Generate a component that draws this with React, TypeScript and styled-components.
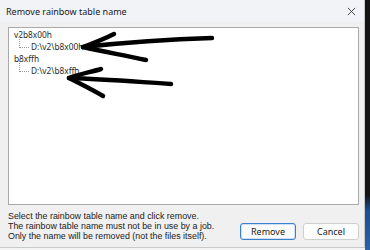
import React from "react";
import styled, { createGlobalStyle } from "styled-components";

const GlobalStyle = createGlobalStyle`
  html, body {
    margin: 0;
    padding: 0;
    background: #f4f4f4;
  }
  body {
    font-family: "Noto Sans", "Open Sans", sans-serif;
    font-size: 9px;
    color: #1e1e1e;
  }
`;

type Node = { name: string; path: string };

const nodes: Node[] = [
  { name: "v2b8x00h", path: "D:\\v2\\b8x00h" },
  { name: "b8xffh", path: "D:\\v2\\b8xffh" },
];

const App = () => {
  return (
    <>
      <GlobalStyle />
      <Screen>
        <Window>
          <TitleBar>
            <span>Remove rainbow table name</span>
            <CloseIcon viewBox="0 0 10 10" aria-hidden="true">
              <path d="M1 1 L9 9 M9 1 L1 9" />
            </CloseIcon>
          </TitleBar>
          <Body>
            <ListBox>
              {nodes.map((n) => (
                <TreeGroup key={n.name}>
                  <TreeRoot>{n.name}</TreeRoot>
                  <TreeChild>{n.path}</TreeChild>
                </TreeGroup>
              ))}
              <Scribble viewBox="0 0 350 176" aria-hidden="true">
                <path d="M203 10 C170 11 120 14 74 19" />
                <path d="M105 6 C95 11 85 15 74 19 C95 24 115 27 137 32" />
                <path d="M162 56 C130 54 95 51 60 50" />
                <path d="M92 41 C82 44 71 46 60 50 C72 56 84 62 94 68" />
              </Scribble>
            </ListBox>
            <Footer>
              <Hint>
                <p>Select the rainbow table name and click remove.</p>
                <p>The rainbow table name must not be in use by a job.</p>
                <p>Only the name will be removed (not the files itself).</p>
              </Hint>
              <Buttons>
                <Button $primary>Remove</Button>
                <Button>Cancel</Button>
              </Buttons>
            </Footer>
          </Body>
        </Window>
        <Edge />
      </Screen>
    </>
  );
};

export default App;

const Screen = styled.div`
  display: flex;
  width: 370px;
  height: 250px;
  overflow: hidden;
`;

const Window = styled.div`
  width: 364px;
  height: 247px;
  display: flex;
  flex-direction: column;
  background: #f0f0f0;
  border-right: 1px solid #c9c9c9;
  border-bottom: 1px solid #c9c9c9;
`;

const Edge = styled.div`
  flex: 1;
  height: 250px;
  background: linear-gradient(#141414 0%, #141414 78%, #1d4d8c 84%, #2a63a8 100%);
`;

const TitleBar = styled.div`
  height: 22px;
  display: flex;
  align-items: center;
  justify-content: space-between;
  padding: 0 8px 0 6px;
  background: #f1f3f7;
  font-size: 9px;
  color: #1a1a1a;
`;

const CloseIcon = styled.svg`
  width: 9px;
  height: 9px;
  stroke: #333;
  stroke-width: 1;
  fill: none;
`;

const Body = styled.div`
  flex: 1;
  display: flex;
  flex-direction: column;
  padding: 5px 5px 0 8px;
`;

const ListBox = styled.div`
  position: relative;
  height: 174px;
  background: #fff;
  border: 1px solid #a9a9a9;
  padding: 1px 4px;
`;

const TreeGroup = styled.div`
  display: flex;
  flex-direction: column;
`;

const TreeRoot = styled.div`
  height: 12px;
  line-height: 12px;
  font-size: 8.3px;
  padding-left: 1px;
  color: #2a2a2a;
`;

const TreeChild = styled.div`
  position: relative;
  height: 12px;
  line-height: 12px;
  font-size: 8.3px;
  padding-left: 18px;
  color: #2a2a2a;
  &::before {
    content: "";
    position: absolute;
    left: 6px;
    top: -4px;
    width: 9px;
    height: 10px;
    border-left: 1px dotted #999;
    border-bottom: 1px dotted #999;
  }
`;

const Scribble = styled.svg`
  position: absolute;
  left: 0;
  top: 0;
  width: 350px;
  height: 176px;
  fill: none;
  stroke: #000;
  stroke-width: 4.5;
  stroke-linecap: round;
  stroke-linejoin: round;
`;

const Footer = styled.div`
  flex: 1;
  display: flex;
  align-items: flex-end;
  justify-content: space-between;
  padding-bottom: 6px;
`;

const Hint = styled.div`
  p {
    margin: 0;
    height: 10px;
    line-height: 10px;
    font-family: "Liberation Sans", Arial, sans-serif;
    font-size: 8.9px;
    color: #222;
  }
`;

const Buttons = styled.div`
  display: flex;
  gap: 7px;
  padding-bottom: 1px;
`;

const Button = styled.button<{ $primary?: boolean }>`
  width: 56px;
  height: 17px;
  padding: 0;
  font-family: inherit;
  font-size: 9px;
  color: #1a1a1a;
  background: #fdfdfd;
  border: 1px solid ${(p) => (p.$primary ? "#3b7fd1" : "#cfcfcf")};
  border-radius: 3px;
  box-shadow: ${(p) => (p.$primary ? "inset 0 0 0 1px #cfe0f5" : "none")};
`;
